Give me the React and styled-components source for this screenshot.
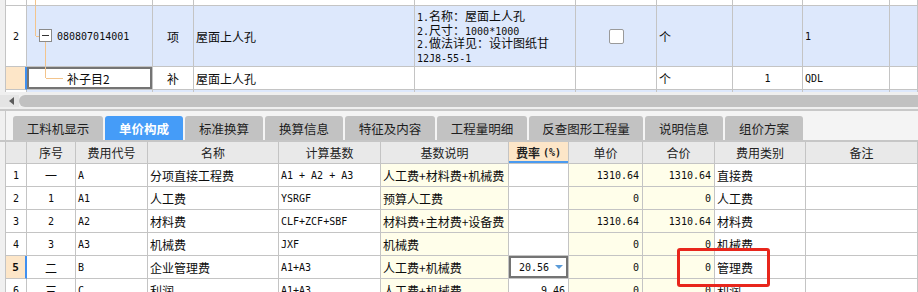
import styled, { createGlobalStyle } from 'styled-components';

const LINE = '#c4c4c4';
const BLUE_ROW = '#dde8fc';
const PEACH = '#fde6c8';
const CREAM = '#fffeea';
const CJK = `"Noto Sans CJK SC", "Noto Sans", sans-serif`;
const MONO = `"DejaVu Sans Mono", "Noto Sans CJK SC", monospace`;

const GlobalStyle = createGlobalStyle`
  html, body {
    margin: 0;
    padding: 0;
    background: #fff;
  }
  body {
    width: 918px;
    height: 292px;
    overflow: hidden;
    font-family: ${CJK};
    font-size: 12px;
    color: #0c0c0c;
  }
`;

const Screen = styled.div`
  position: relative;
  width: 918px;
  height: 292px;
  overflow: hidden;
  display: flex;
  flex-direction: column;
`;

const TopGrid = styled.div`
  height: 92px;
  flex: none;
  overflow: hidden;
`;

const topCols = '6px 21px 126px 41px 221px 161px 81px 76px 70px 87px 1fr';
const feeCols = '6px 21px 49px 72px 131px 102px 128px 60px 74px 72px 91px 1fr';

const Row = styled.div`
  display: grid;
  grid-template-columns: ${(p) => p.$cols};
  height: ${(p) => p.$h}px;
  background: ${(p) => p.$bg || '#fff'};
`;

const Cell = styled.div`
  box-sizing: border-box;
  min-width: 0;
  overflow: hidden;
  white-space: nowrap;
  border-right: 1px solid ${LINE};
  border-bottom: 1px solid ${LINE};
  display: flex;
  align-items: center;
  justify-content: ${(p) =>
    p.$align === 'right' ? 'flex-end' : p.$align === 'center' ? 'center' : 'flex-start'};
  padding: 0 ${(p) => (p.$align === 'right' ? 3 : 2)}px;
  font-family: ${(p) => (p.$mono ? MONO : CJK)};
  font-size: ${(p) => (p.$mono ? 10 : 12)}px;
  font-weight: ${(p) => (p.$bold ? 700 : 400)};
  background: ${(p) => p.$bg || 'transparent'};
  box-shadow: ${(p) => (p.$focus ? 'inset 0 0 0 2px #747474' : 'none')};
`;

const Gutter = styled.div`
  background: #f0f0f0;
  border-right: 1px solid ${LINE};
`;

const RowNum = styled(Cell).attrs({ $align: 'center', $mono: true })`
  background: ${(p) => (p.$active ? PEACH : '#fff')};
  font-weight: ${(p) => (p.$active ? 700 : 400)};
  font-size: ${(p) => (p.$active ? 11 : 10)}px;
  border-right: ${(p) => (p.$active ? '2px solid #3f8ff0' : `1px solid ${LINE}`)};
`;

const TreeCell = styled(Cell)`
  align-items: stretch;
  padding-left: 8px;
`;

const TreeSvg = styled.svg`
  flex: none;
  height: 100%;
  overflow: visible;
  & line {
    stroke: #f3c48c;
    stroke-width: 1;
    shape-rendering: crispEdges;
  }
`;

const TreeLabel = styled.span`
  align-self: center;
  margin-left: 4px;
  font-family: ${(p) => (p.$mono ? MONO : CJK)};
  font-size: ${(p) => (p.$mono ? 10 : 12)}px;
`;

const Desc = styled(Cell)`
  flex-direction: column;
  align-items: flex-start;
  justify-content: ${(p) => (p.$top ? 'flex-start' : 'center')};
  padding-top: ${(p) => (p.$top ? 3 : 0)}px;
  line-height: 13.5px;
`;

const DescLine = styled.span`
  display: block;
  height: 13.5px;
`;

const Ascii = styled.span`
  font-family: ${MONO};
  font-size: 10px;
`;

const Check = styled.span`
  width: 13px;
  height: 13px;
  border: 1px solid #9a9a9a;
  border-radius: 2px;
  background: #fff;
`;

const ScrollArea = styled.div`
  flex: none;
  height: 17px;
  box-sizing: border-box;
  padding: 3px 0 2px;
  background: #efefef;
  display: flex;
`;

const ScrollButton = styled.div`
  width: 19px;
  display: flex;
  align-items: center;
  justify-content: center;
  background: #e4e4e4;
  &::before {
    content: '';
    margin-left: 4px;
    border-style: solid;
    border-width: 4px 5px 4px 0;
    border-color: transparent #5c5c5c transparent transparent;
  }
`;

const ScrollThumb = styled.div`
  flex: 1;
  background: #c1c1c1;
  border-radius: 6px 0 0 6px;
`;

const Lower = styled.div`
  flex: 1;
  display: flex;
  flex-direction: column;
  background: #f0f0f0;
  border-top: 2px solid #c8c8c8;
`;

const TabBar = styled.div`
  flex: none;
  height: 29px;
  box-sizing: border-box;
  margin-left: 5px;
  border-left: 1px solid #c8c8c8;
  background: #f4f4f4;
  padding: 5px 0 0 7px;
  display: flex;
  gap: 2px;
`;

const Tab = styled.div`
  width: ${(p) => p.$w}px;
  display: flex;
  align-items: center;
  justify-content: center;
  border-radius: 3px 3px 0 0;
  background: ${(p) => (p.$active ? '#459cf8' : '#c2c2c2')};
  color: ${(p) => (p.$active ? '#fff' : '#1e1e1e')};
  font-weight: ${(p) => (p.$active ? 700 : 400)};
  font-size: 12.5px;
`;

const FeeGrid = styled.div`
  flex: 1;
  background: #fff;
  border-top: 2px solid #c6c6c6;
`;

const Head = styled(Cell).attrs({ $align: 'center' })`
  background: ${(p) => (p.$hot ? PEACH : '#e9e9e9')};
  color: #222;
  font-weight: ${(p) => (p.$hot ? 700 : 400)};
  box-shadow: ${(p) => (p.$hot ? 'inset 0 -2px 0 #4a9af0' : 'none')};
`;

const Caret = styled.span`
  margin-left: 6px;
  margin-right: 2px;
  border-style: solid;
  border-width: 4px 4px 0 4px;
  border-color: #5b9bd8 transparent transparent transparent;
`;

const Callout = styled.div`
  position: absolute;
  left: 677px;
  top: 248px;
  width: 93px;
  height: 39px;
  box-sizing: border-box;
  border: 3px solid #e8261c;
  border-radius: 3px;
  pointer-events: none;
`;

const tabs = [
  ['工料机显示', 90],
  ['单价构成', 78, true],
  ['标准换算', 78],
  ['换算信息', 78],
  ['特征及内容', 90],
  ['工程量明细', 90],
  ['反查图形工程量', 114],
  ['说明信息', 78],
  ['组价方案', 78],
];

const feeRows = [
  { n: '1', seq: '一', code: 'A', name: '分项直接工程费', base: 'A1 + A2 + A3', desc: '人工费+材料费+机械费', rate: '', unit: '1310.64', total: '1310.64', kind: '直接费' },
  { n: '2', seq: '1', code: 'A1', name: '人工费', base: 'YSRGF', desc: '预算人工费', rate: '', unit: '0', total: '0', kind: '人工费' },
  { n: '3', seq: '2', code: 'A2', name: '材料费', base: 'CLF+ZCF+SBF', desc: '材料费+主材费+设备费', rate: '', unit: '1310.64', total: '1310.64', kind: '材料费' },
  { n: '4', seq: '3', code: 'A3', name: '机械费', base: 'JXF', desc: '机械费', rate: '', unit: '0', total: '0', kind: '机械费' },
  { n: '5', seq: '二', code: 'B', name: '企业管理费', base: 'A1+A3', desc: '人工费+机械费', rate: '20.56', unit: '0', total: '0', kind: '管理费', active: true },
  { n: '6', seq: '三', code: 'C', name: '利润', base: 'A1+A3', desc: '人工费+机械费', rate: '9.46', unit: '0', total: '0', kind: '利润' },
];

function BillRows() {
  return (
    <TopGrid>
      <Row $cols={topCols} $h={6}>
        <Gutter />
        <RowNum />
        <TreeCell>
          <TreeSvg width="20">
            <line x1="0.5" y1="0" x2="0.5" y2="100%" />
          </TreeSvg>
        </TreeCell>
        {Array.from({ length: 8 }, (_, i) => <Cell key={i} />)}
      </Row>

      <Row $cols={topCols} $h={61} $bg={BLUE_ROW}>
        <Gutter />
        <RowNum>2</RowNum>
        <TreeCell>
          <TreeSvg width="18">
            <line x1="0.5" y1="0" x2="0.5" y2="50%" />
            <line x1="0.5" y1="50%" x2="4" y2="50%" />
            <line x1="10.5" y1="50%" x2="10.5" y2="100%" />
            <svg x="4" y="50%" overflow="visible">
              <rect x="0.5" y="-6.5" width="12" height="12" fill="#fff" stroke="#8a8a8a" />
              <line x1="3" y1="-0.5" x2="10" y2="-0.5" style={{ stroke: '#333' }} />
            </svg>
          </TreeSvg>
          <TreeLabel $mono>080807014001</TreeLabel>
        </TreeCell>
        <Cell $align="center">项</Cell>
        <Cell>屋面上人孔</Cell>
        <Desc>
          <DescLine><Ascii>1.</Ascii>名称：屋面上人孔</DescLine>
          <DescLine><Ascii>2.</Ascii>尺寸：<Ascii>1000*1000</Ascii></DescLine>
          <DescLine><Ascii>2.</Ascii>做法详见：设计图纸甘</DescLine>
          <DescLine><Ascii>12J8-55-1</Ascii></DescLine>
        </Desc>
        <Cell $align="center"><Check /></Cell>
        <Cell>个</Cell>
        <Cell />
        <Cell $mono>1</Cell>
        <Cell />
      </Row>

      <Row $cols={topCols} $h={23}>
        <Gutter />
        <RowNum $active />
        <TreeCell $focus>
          <TreeSvg width="28">
            <line x1="10.5" y1="0" x2="10.5" y2="50%" />
            <line x1="10.5" y1="50%" x2="28" y2="50%" />
          </TreeSvg>
          <TreeLabel>补子目2</TreeLabel>
        </TreeCell>
        <Cell $align="center">补</Cell>
        <Cell>屋面上人孔</Cell>
        <Cell />
        <Cell />
        <Cell>个</Cell>
        <Cell $align="center" $mono>1</Cell>
        <Cell $mono>QDL</Cell>
        <Cell />
      </Row>

      <Row $cols={topCols} $h={23} $bg={BLUE_ROW}>
        <Gutter />
        <RowNum />
        <Cell />
        <Cell />
        <Cell />
        <Desc $top>
          <DescLine>&nbsp;<Ascii>1.</Ascii>名称：上人孔盖板</DescLine>
        </Desc>
        <Cell />
        <Cell />
        <Cell />
        <Cell />
        <Cell />
      </Row>
    </TopGrid>
  );
}

function FeeTable() {
  return (
    <FeeGrid>
      <Row $cols={feeCols} $h={22}>
        <Gutter />
        <Head />
        <Head>序号</Head>
        <Head>费用代号</Head>
        <Head>名称</Head>
        <Head>计算基数</Head>
        <Head>基数说明</Head>
        <Head $hot>
          费率<Ascii style={{ marginLeft: 3, fontWeight: 700 }}>(%)</Ascii>
        </Head>
        <Head>单价</Head>
        <Head>合价</Head>
        <Head>费用类别</Head>
        <Head>备注</Head>
      </Row>
      {feeRows.map((r) => (
        <Row key={r.n} $cols={feeCols} $h={23}>
          <Gutter />
          <RowNum $active={r.active}>{r.n}</RowNum>
          <Cell $align="center" $mono={/^\d+$/.test(r.seq)}>{r.seq}</Cell>
          <Cell $mono>{r.code}</Cell>
          <Cell>{r.name}</Cell>
          <Cell $mono>{r.base}</Cell>
          <Cell $bg={CREAM}>{r.desc}</Cell>
          {r.active ? (
            <Cell $align="right" $mono $focus>
              {r.rate}
              <Caret />
            </Cell>
          ) : (
            <Cell $align="right" $mono>{r.rate}</Cell>
          )}
          <Cell $align="right" $mono $bg={CREAM}>{r.unit}</Cell>
          <Cell $align="right" $mono $bg={CREAM}>{r.total}</Cell>
          <Cell>{r.kind}</Cell>
          <Cell />
        </Row>
      ))}
    </FeeGrid>
  );
}

export default function App() {
  return (
    <Screen>
      <GlobalStyle />
      <BillRows />
      <ScrollArea>
        <ScrollButton />
        <ScrollThumb />
      </ScrollArea>
      <Lower>
        <TabBar>
          {tabs.map(([label, w, active]) => (
            <Tab key={label} $w={w} $active={active}>
              {label}
            </Tab>
          ))}
        </TabBar>
        <FeeTable />
      </Lower>
      <Callout />
    </Screen>
  );
}
